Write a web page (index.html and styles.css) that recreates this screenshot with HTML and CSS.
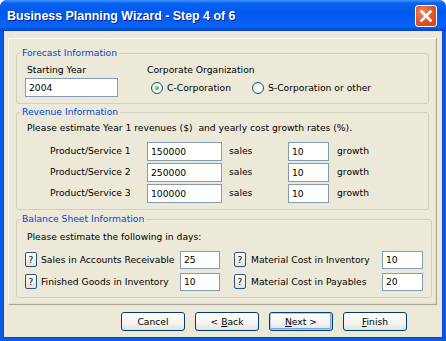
FILE: index.html
```html
<!DOCTYPE html>
<html lang="en">
<head>
    <meta charset="UTF-8" />
    <title>Business Planning Wizard</title>
    <link rel="stylesheet" href="styles.css">
</head>
<body>

    <div class="window">
        <div class="titlebar">
            <span class="title">Business Planning Wizard - Step 4 of 6</span>
            <button type="button" class="close" aria-label="Close">
                <svg width="20" height="20" viewBox="0 0 20 20">
                    <path d="M5.5 5.5 L14.5 14.5 M14.5 5.5 L5.5 14.5" stroke="#fff" stroke-width="2.6" stroke-linecap="square" fill="none"/>
                </svg>
            </button>
        </div>

        <div class="client">
            <div class="panel">

                <!-- Forecast -->
                <fieldset class="group group-forecast">
                    <legend>Forecast Information</legend>
                    <div class="forecast">
                        <div class="col-year">
                            <label class="caption" for="startYear">Starting Year</label>
                            <input type="text" id="startYear" class="txt year" value="2004">
                        </div>
                        <div class="col-org">
                            <span class="caption">Corporate Organization</span>
                            <div class="radios">
                                <label class="radio radio-first"><span class="dot checked"></span>C-Corporation</label>
                                <label class="radio"><span class="dot"></span>S-Corporation or other</label>
                            </div>
                        </div>
                    </div>
                </fieldset>

                <!-- Revenue -->
                <fieldset class="group group-revenue">
                    <legend>Revenue Information</legend>
                    <p class="intro">Please estimate Year 1 revenues ($)&nbsp; and yearly cost growth rates (%).</p>
                    <div class="rev-grid">
                        <span>Product/Service 1</span>
                        <input type="text" class="txt" value="150000">
                        <span class="unit">sales</span>
                        <input type="text" class="txt" value="10">
                        <span class="unit2">growth</span>

                        <span>Product/Service 2</span>
                        <input type="text" class="txt" value="250000">
                        <span class="unit">sales</span>
                        <input type="text" class="txt" value="10">
                        <span class="unit2">growth</span>

                        <span>Product/Service 3</span>
                        <input type="text" class="txt" value="100000">
                        <span class="unit">sales</span>
                        <input type="text" class="txt" value="10">
                        <span class="unit2">growth</span>
                    </div>
                </fieldset>

                <!-- Balance sheet -->
                <fieldset class="group group-balance">
                    <legend>Balance Sheet Information</legend>
                    <p class="intro">Please estimate the following in days:</p>
                    <div class="bal-grid">
                        <button type="button" class="help">?</button>
                        <span class="bal-label">Sales in Accounts Receivable</span>
                        <input type="text" class="txt small" value="25">
                        <span></span>
                        <button type="button" class="help">?</button>
                        <span class="bal-label">Material Cost in Inventory</span>
                        <input type="text" class="txt small" value="10">

                        <button type="button" class="help">?</button>
                        <span class="bal-label">Finished Goods in Inventory</span>
                        <input type="text" class="txt small" value="10">
                        <span></span>
                        <button type="button" class="help">?</button>
                        <span class="bal-label">Material Cost in Payables</span>
                        <input type="text" class="txt small" value="20">
                    </div>
                </fieldset>
            </div>

            <div class="actions">
                <button type="button" class="btn">Cancel</button>
                <button type="button" class="btn">&lt; <u>B</u>ack</button>
                <button type="button" class="btn default"><u>N</u>ext &gt;</button>
                <button type="button" class="btn"><u>F</u>inish</button>
            </div>
        </div>
    </div>

</body>
</html>
```

FILE: styles.css
```css
/* Reset */
* {
    margin: 0;
    padding: 0;
    box-sizing: border-box;
}

body {
    width: 446px;
    height: 341px;
    background: #fff;
    font-family: "DejaVu Sans", sans-serif;
    font-size: 9.2px;
    line-height: 12px;
    color: #000;
}

/* XP style window frame */
.window {
    width: 446px;
    height: 341px;
    display: flex;
    flex-direction: column;
    background: #0b5ae8;
    border-radius: 7px 7px 0 0;
    overflow: hidden;
}

.titlebar {
    height: 31px;
    display: flex;
    align-items: center;
    padding: 0 9px 0 7px;
    background: linear-gradient(180deg, #3d95ff 0%, #0a62f0 10%, #0058ee 40%, #0a63f5 85%, #0052e0 94%, #003dd7 100%);
}

.title {
    flex: 1;
    font-family: "Liberation Sans", Arial, sans-serif;
    font-weight: bold;
    font-size: 12.4px;
    color: #fff;
    text-shadow: 1px 1px 0 #0a1e8c;
    padding-top: 1px;
}

.close {
    width: 22px;
    height: 22px;
    border: 1px solid #fff;
    border-radius: 3px;
    background: radial-gradient(circle at 35% 30%, #f08a62 0%, #e25a30 45%, #c8401a 100%);
    display: flex;
    align-items: center;
    justify-content: center;
}

.client {
    flex: 1;
    margin: 0 4px 4px;
    background: #ece9d8;
    box-shadow: 0 0 0 1px #0842c8;
    display: flex;
    flex-direction: column;
}

.panel {
    margin: 7px 5px 0 4px;
    padding: 8px 7px 6px;
    border: 1px solid;
    border-color: #fbfaf5 #aca899 #aca899 #fbfaf5;
    box-shadow: inset -1px -1px 0 #e2dfcf;
}

/* Group boxes */
.group {
    border: 1px solid #d0d0bf;
    border-radius: 3px;
}

.group legend {
    color: #0046d5;
    padding: 0 2px;
    margin-left: -5px;
    line-height: 12px;
}

.group-forecast {
    padding: 5px 8px 6px;
}

.group-revenue {
    margin-top: 2px;
    padding: 4px 8px 6px 10px;
}

.group-revenue legend {
    margin-left: -7px;
}

.group-balance {
    margin-top: 3px;
    padding: 6px 8px 6px;
}

.caption {
    display: block;
    padding-left: 2px;
    margin-bottom: 2px;
}

.col-org .caption {
    padding-left: 0;
}

.txt {
    height: 19px;
    border: 1px solid #7f9db9;
    background: #fff;
    padding: 0 3px;
    font: inherit;
    color: #000;
    outline: none;
}

.forecast {
    display: flex;
}

.col-year {
    width: 122px;
}

.year {
    width: 93px;
}

.radios {
    display: flex;
    height: 19px;
    padding-left: 4px;
}

.radio {
    display: flex;
    align-items: center;
}

.radio-first {
    width: 101px;
}

.dot {
    width: 12px;
    height: 12px;
    border: 1px solid #1c5180;
    border-radius: 50%;
    background: radial-gradient(circle at 60% 60%, #fff 20%, #dcdcd7 100%);
    margin-right: 4px;
    position: relative;
}

.dot.checked::after {
    content: "";
    position: absolute;
    left: 3px;
    top: 3px;
    width: 4px;
    height: 4px;
    border-radius: 50%;
    background: radial-gradient(circle at 40% 40%, #7ce27c, #21a121);
}

.intro {
    margin-bottom: 7px;
}

.group-balance .intro {
    padding-left: 2px;
}

/* Revenue rows */
.rev-grid {
    display: grid;
    grid-template-columns: 97px 75px 66px 41px auto;
    grid-auto-rows: 20px;
    row-gap: 1px;
    align-items: center;
    margin-left: 23px;
}

.rev-grid .txt {
    width: 100%;
}

.unit {
    padding-left: 7px;
}

.unit2 {
    padding-left: 8px;
}

/* Balance sheet rows */
.bal-grid {
    display: grid;
    grid-template-columns: 12px 143px 40px 14px 13px 135px 41px;
    grid-auto-rows: 19px;
    row-gap: 3px;
    align-items: center;
}

.bal-grid .txt {
    width: 100%;
    height: 18px;
}

.bal-label {
    padding-left: 4px;
}

.help {
    width: 12px;
    height: 15px;
    border: 1px solid #2a4f86;
    border-radius: 2px;
    background: linear-gradient(180deg, #fff, #e4e4dc);
    font: inherit;
    font-size: 9px;
    line-height: 12px;
    color: #000;
    text-align: center;
}

/* Wizard buttons */
.actions {
    display: flex;
    justify-content: flex-end;
    gap: 10px;
    padding: 7px 35px 0 0;
}

.btn {
    width: 64px;
    height: 19px;
    border: 1px solid #003c74;
    border-radius: 3px;
    background: linear-gradient(180deg, #fff 0%, #f4f4f0 60%, #e3e2da 100%);
    font: inherit;
    color: #000;
}

.btn u {
    text-decoration: underline;
}

.btn.default {
    box-shadow: inset 0 0 0 1px #b5cdf3, inset -1px -1px 0 1px #7fa0e6;
}
```
